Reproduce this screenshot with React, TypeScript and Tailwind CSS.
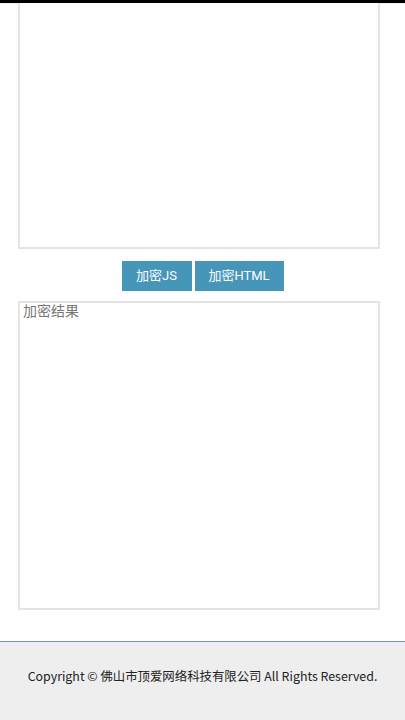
export default function App() {
  return (
    <div className="flex min-h-[720px] flex-col bg-white font-['Roboto','Noto_Sans_CJK_SC',sans-serif]">
      <div className="h-[3px] bg-black" />
      <div className="h-px bg-[#eeeeee]" />
      <main className="flex flex-1 flex-col">
        <textarea
          className="-mt-px ml-[18px] block h-[246px] w-[362px] resize-none border-2 border-t-0 border-[#e4e4e4] bg-white p-1 text-sm outline-none"
          defaultValue=""
        />
        <div className="mt-3 flex justify-center gap-[3px]">
          <button
            type="button"
            className="h-[30px] w-[70px] bg-[#4696b9] font-['Roboto','Noto_Sans_CJK_SC',sans-serif] text-[13px] text-white"
          >
            加密JS
          </button>
          <button
            type="button"
            className="h-[30px] w-[89px] bg-[#4696b9] font-['Roboto','Noto_Sans_CJK_SC',sans-serif] text-[13px] text-white"
          >
            加密HTML
          </button>
        </div>
        <textarea
          className="mt-[10px] ml-[18px] block h-[309px] w-[362px] resize-none border-2 border-[#e4e4e4] bg-white px-[3px] pt-0 font-['Roboto','Noto_Sans_CJK_SC',sans-serif] text-[14px] leading-[17px] text-[#333] outline-none placeholder:text-[#777]"
          placeholder="加密结果"
        />
      </main>
      <footer className="mt-[31px] flex h-[80px] items-center justify-center border-t border-[#6f93bb] bg-[#eeeeee] pb-[10px]">
        <p className="font-['Noto_Sans_CJK_SC','Noto_Sans',sans-serif] text-[12.4px] text-[#222]">
          Copyright © 佛山市顶爱网络科技有限公司 All Rights Reserved.
        </p>
      </footer>
    </div>
  );
}
